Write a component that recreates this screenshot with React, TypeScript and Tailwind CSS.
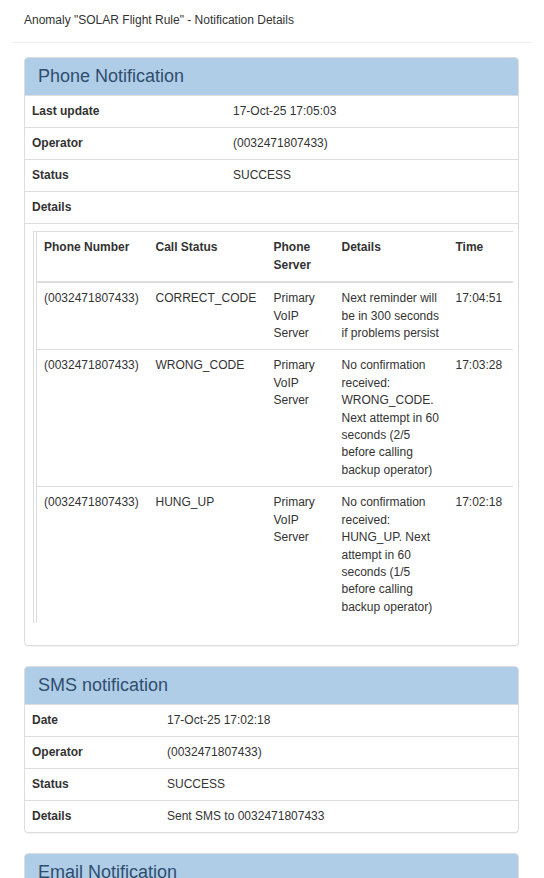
const calls = [
  {
    number: "(0032471807433)",
    status: "CORRECT_CODE",
    server: "Primary VoIP Server",
    details: "Next reminder will be in 300 seconds if problems persist",
    time: "17:04:51",
  },
  {
    number: "(0032471807433)",
    status: "WRONG_CODE",
    server: "Primary VoIP Server",
    details:
      "No confirmation received: WRONG_CODE. Next attempt in 60 seconds (2/5 before calling backup operator)",
    time: "17:03:28",
  },
  {
    number: "(0032471807433)",
    status: "HUNG_UP",
    server: "Primary VoIP Server",
    details:
      "No confirmation received: HUNG_UP. Next attempt in 60 seconds (1/5 before calling backup operator)",
    time: "17:02:18",
  },
];

function Panel({ title, children }: { title: string; children?: React.ReactNode }) {
  return (
    <div className="ml-6 mr-[25px] mb-5 rounded border border-[#dddddd] bg-white shadow-[0_1px_1px_rgba(0,0,0,0.05)] overflow-hidden">
      <div className="bg-[#afcde7] px-[13px] py-[9px]">
        <h3 className="text-[18px] leading-[19px] text-[#2f4e6e]">{title}</h3>
      </div>
      {children}
    </div>
  );
}

function InfoRow({ label, value, labelWidth }: { label: string; value?: string; labelWidth: string }) {
  return (
    <div className="flex border-t border-[#dddddd] leading-[17px]">
      <div className={`${labelWidth} shrink-0 px-[7px] py-[7px] font-bold`}>{label}</div>
      <div className="flex-1 px-[8px] py-[7px]">{value}</div>
    </div>
  );
}

function CallTable() {
  return (
    <div className="border-t border-[#dddddd] pt-[7px] pb-[22px] pl-2 pr-[5px]">
      <div className="border-t border-l border-[#dddddd] pl-[2px]">
        <table className="w-full table-fixed border-l border-[#dddddd] text-left">
          <colgroup>
            <col className="w-[112px]" />
            <col className="w-[118px]" />
            <col className="w-[68px]" />
            <col className="w-[114px]" />
            <col />
          </colgroup>
          <thead>
            <tr className="border-b-2 border-[#dddddd] align-top">
              <th className="px-[7px] py-[7px] font-bold">Phone Number</th>
              <th className="px-[7px] py-[7px] font-bold">Call Status</th>
              <th className="px-[7px] py-[7px] font-bold">Phone Server</th>
              <th className="px-[7px] py-[7px] font-bold">Details</th>
              <th className="px-[7px] py-[7px] font-bold">Time</th>
            </tr>
          </thead>
          <tbody>
            {calls.map((c, i) => (
              <tr key={i} className={`align-top ${i > 0 ? "border-t border-[#dddddd]" : ""}`}>
                <td className="px-[7px] py-[7px]">{c.number}</td>
                <td className="px-[7px] py-[7px]">{c.status}</td>
                <td className="px-[7px] py-[7px]">{c.server}</td>
                <td className="px-[7px] py-[7px]">{c.details}</td>
                <td className="px-[7px] py-[7px]">{c.time}</td>
              </tr>
            ))}
          </tbody>
        </table>
      </div>
    </div>
  );
}

export default function App() {
  return (
    <div className="min-h-screen bg-white font-['Liberation_Sans',Arial,sans-serif] text-[12px] leading-[17.4px] text-[#333333]">
      <div className="px-6 pt-[12px] pb-[13px]">Anomaly "SOLAR Flight Rule" - Notification Details</div>
      <div className="mx-3 mb-[14px] border-t border-[#eeeeee]" />

      <Panel title="Phone Notification">
        <InfoRow label="Last update" value="17-Oct-25 17:05:03" labelWidth="w-[200px]" />
        <InfoRow label="Operator" value="(0032471807433)" labelWidth="w-[200px]" />
        <InfoRow label="Status" value="SUCCESS" labelWidth="w-[200px]" />
        <InfoRow label="Details" labelWidth="w-[200px]" />
        <CallTable />
      </Panel>

      <Panel title="SMS notification">
        <InfoRow label="Date" value="17-Oct-25 17:02:18" labelWidth="w-[134px]" />
        <InfoRow label="Operator" value="(0032471807433)" labelWidth="w-[134px]" />
        <InfoRow label="Status" value="SUCCESS" labelWidth="w-[134px]" />
        <InfoRow label="Details" value="Sent SMS to 0032471807433" labelWidth="w-[134px]" />
      </Panel>

      <Panel title="Email Notification" />
    </div>
  );
}
